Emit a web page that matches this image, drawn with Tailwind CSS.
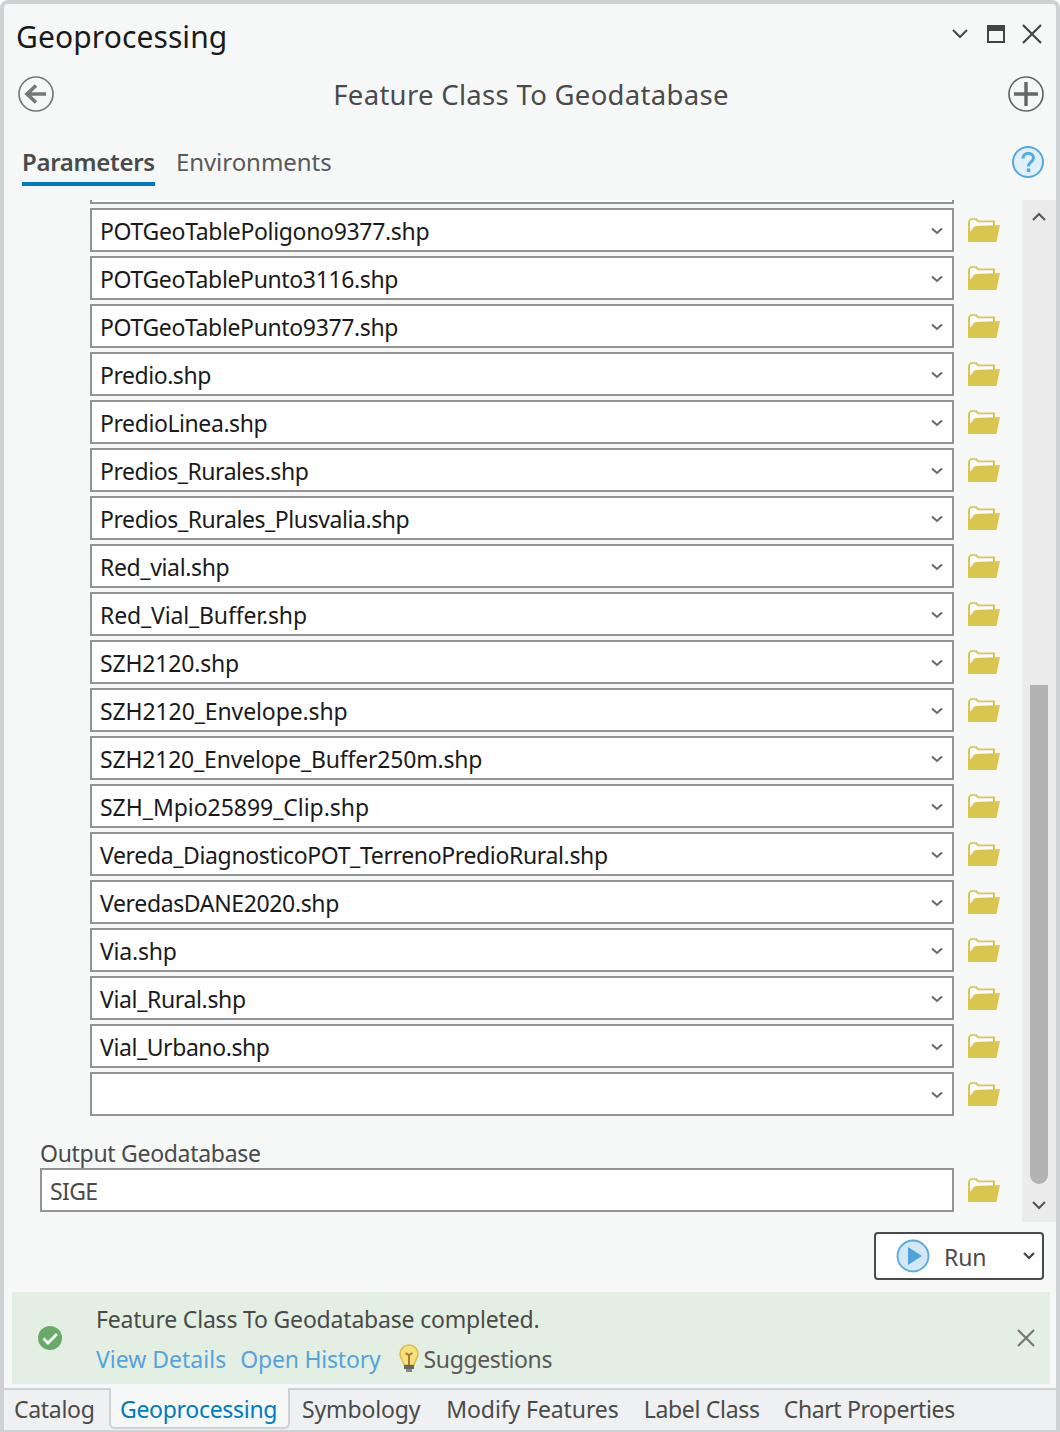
<!DOCTYPE html>
<html><head><meta charset="utf-8"><script src="https://cdn.jsdelivr.net/npm/@tailwindcss/browser@4"></script></head>
<body class="bg-white">
<svg width="0" height="0" class="absolute">
<defs>
<symbol id="folder" viewBox="0 0 32 24"><path d="M1 23V3.500L3 1.200h5l2.500 2.300H26V8" fill="none" stroke="#d9c64e" stroke-width="2"/><path d="M2 10V3.500L3.500 2.200h4l2.500 2.300H25V7.500H9z" fill="#fff"/><path d="M0 24V16L7 8 32 7 28.500 24z" fill="#d9c64e"/></symbol>
<symbol id="chev" viewBox="0 0 12 8"><path d="M1 1.500l5 4.500 5-4.500" fill="none" stroke="#6a6a6a" stroke-width="2"/></symbol>
</defs></svg>
<div class="w-[1060px] h-[1432px] flex flex-col overflow-hidden bg-[#f6f8f8] border-t-4 border-x-4 border-[#d0d1d4] rounded-t-lg font-['Noto_Sans',sans-serif] relative">
  <div class="h-[66px] flex items-center justify-between pl-[12px] pr-[14px] shrink-0">
    <div class="text-[30px] leading-[40px] text-[#1a1a1a] tracking-[0.1px]">Geoprocessing</div>
    <div class="flex items-center -mt-[6px]">
      <svg width="18" height="12" viewBox="0 0 18 12"><path d="M2 2l7 7 7-7" fill="none" stroke="#4a4a4a" stroke-width="2.200"/></svg>
      <svg class="ml-[18px]" width="18" height="18" viewBox="0 0 18 18"><rect x="1" y="1" width="16" height="16" fill="none" stroke="#444" stroke-width="2"/><rect x="1" y="1" width="16" height="5" fill="#444"/></svg>
      <svg class="ml-[17px]" width="20" height="20" viewBox="0 0 20 20"><path d="M1 1l18 18M19 1L1 19" stroke="#444" stroke-width="2.200"/></svg>
    </div>
  </div>
  <div class="h-[48px] flex items-center justify-between pl-[14px] pr-[12px] shrink-0">
    <svg width="36" height="36" viewBox="0 0 36 36"><circle cx="18" cy="18" r="17" fill="none" stroke="#777" stroke-width="1.700"/><path d="M28 18H10M18 9.500L9 18l9 8.500" fill="none" stroke="#777" stroke-width="3.600"/></svg>
    <div class="text-[27.500px] leading-[36px] pt-[2px] text-[#4a4a4a] tracking-[0.3px]">Feature Class To Geodatabase</div>
    <svg width="36" height="36" viewBox="0 0 36 36"><circle cx="18" cy="18" r="17" fill="none" stroke="#666" stroke-width="1.700"/><path d="M18 6v24M6 18h24" stroke="#666" stroke-width="3.400"/></svg>
  </div>
  <div class="h-[82px] flex pl-[18px] pr-[12px] items-start justify-between shrink-0">
    <div class="flex gap-[21px] mt-[25px]">
      <div class="h-[43px] border-b-4 border-[#007ac2] text-[24px] leading-[38px] font-semibold text-[#4a4a4a] tracking-[-0.3px]">Parameters</div>
      <div class="h-[43px] text-[24px] leading-[38px] text-[#595959] tracking-[-0.05px]">Environments</div>
    </div>
    <svg class="mt-[28px]" width="32" height="32" viewBox="0 0 32 32"><circle cx="16" cy="16" r="15" fill="#dfeffb" stroke="#56a8e0" stroke-width="2"/><path d="M11 12.500c0-7 10.500-7 10.500-.5 0 4-5 4-5 8.500" fill="none" stroke="#56a8e0" stroke-width="3"/><rect x="14.800" y="22.500" width="3.500" height="3.500" fill="#56a8e0"/></svg>
  </div>
  <div class="h-[1022px] flex shrink-0 overflow-hidden">
    <div class="w-[1018px] shrink-0">
      <div class="h-[4px] ml-[86px] w-[864px] bg-white border-b-2 border-x-2 border-[#949494]"></div>
      <div class="flex flex-col gap-[4px] mt-[4px]">
        <div class="flex items-center h-[44px]"><div class="ml-[86px] w-[864px] h-[44px] pt-[2px] bg-white border-2 border-[#949494] flex items-center justify-between pl-[8px] pr-[9px] text-[23px] text-[#1a1a1a] tracking-[-0.33px] whitespace-nowrap"><span>POTGeoTablePoligono9377.shp</span><svg width="12" height="8"><use href="#chev"/></svg></div><svg class="ml-[14px]" width="32" height="24"><use href="#folder"/></svg></div>
        <div class="flex items-center h-[44px]"><div class="ml-[86px] w-[864px] h-[44px] pt-[2px] bg-white border-2 border-[#949494] flex items-center justify-between pl-[8px] pr-[9px] text-[23px] text-[#1a1a1a] tracking-[-0.36px] whitespace-nowrap"><span>POTGeoTablePunto3116.shp</span><svg width="12" height="8"><use href="#chev"/></svg></div><svg class="ml-[14px]" width="32" height="24"><use href="#folder"/></svg></div>
        <div class="flex items-center h-[44px]"><div class="ml-[86px] w-[864px] h-[44px] pt-[2px] bg-white border-2 border-[#949494] flex items-center justify-between pl-[8px] pr-[9px] text-[23px] text-[#1a1a1a] tracking-[-0.36px] whitespace-nowrap"><span>POTGeoTablePunto9377.shp</span><svg width="12" height="8"><use href="#chev"/></svg></div><svg class="ml-[14px]" width="32" height="24"><use href="#folder"/></svg></div>
        <div class="flex items-center h-[44px]"><div class="ml-[86px] w-[864px] h-[44px] pt-[2px] bg-white border-2 border-[#949494] flex items-center justify-between pl-[8px] pr-[9px] text-[23px] text-[#1a1a1a] tracking-[-0.46px] whitespace-nowrap"><span>Predio.shp</span><svg width="12" height="8"><use href="#chev"/></svg></div><svg class="ml-[14px]" width="32" height="24"><use href="#folder"/></svg></div>
        <div class="flex items-center h-[44px]"><div class="ml-[86px] w-[864px] h-[44px] pt-[2px] bg-white border-2 border-[#949494] flex items-center justify-between pl-[8px] pr-[9px] text-[23px] text-[#1a1a1a] tracking-[-0.42px] whitespace-nowrap"><span>PredioLinea.shp</span><svg width="12" height="8"><use href="#chev"/></svg></div><svg class="ml-[14px]" width="32" height="24"><use href="#folder"/></svg></div>
        <div class="flex items-center h-[44px]"><div class="ml-[86px] w-[864px] h-[44px] pt-[2px] bg-white border-2 border-[#949494] flex items-center justify-between pl-[8px] pr-[9px] text-[23px] text-[#1a1a1a] tracking-[-0.46px] whitespace-nowrap"><span>Predios_Rurales.shp</span><svg width="12" height="8"><use href="#chev"/></svg></div><svg class="ml-[14px]" width="32" height="24"><use href="#folder"/></svg></div>
        <div class="flex items-center h-[44px]"><div class="ml-[86px] w-[864px] h-[44px] pt-[2px] bg-white border-2 border-[#949494] flex items-center justify-between pl-[8px] pr-[9px] text-[23px] text-[#1a1a1a] tracking-[-0.43px] whitespace-nowrap"><span>Predios_Rurales_Plusvalia.shp</span><svg width="12" height="8"><use href="#chev"/></svg></div><svg class="ml-[14px]" width="32" height="24"><use href="#folder"/></svg></div>
        <div class="flex items-center h-[44px]"><div class="ml-[86px] w-[864px] h-[44px] pt-[2px] bg-white border-2 border-[#949494] flex items-center justify-between pl-[8px] pr-[9px] text-[23px] text-[#1a1a1a] tracking-[-0.36px] whitespace-nowrap"><span>Red_vial.shp</span><svg width="12" height="8"><use href="#chev"/></svg></div><svg class="ml-[14px]" width="32" height="24"><use href="#folder"/></svg></div>
        <div class="flex items-center h-[44px]"><div class="ml-[86px] w-[864px] h-[44px] pt-[2px] bg-white border-2 border-[#949494] flex items-center justify-between pl-[8px] pr-[9px] text-[23px] text-[#1a1a1a] tracking-[-0.15px] whitespace-nowrap"><span>Red_Vial_Buffer.shp</span><svg width="12" height="8"><use href="#chev"/></svg></div><svg class="ml-[14px]" width="32" height="24"><use href="#folder"/></svg></div>
        <div class="flex items-center h-[44px]"><div class="ml-[86px] w-[864px] h-[44px] pt-[2px] bg-white border-2 border-[#949494] flex items-center justify-between pl-[8px] pr-[9px] text-[23px] text-[#1a1a1a] tracking-[-0.18px] whitespace-nowrap"><span>SZH2120.shp</span><svg width="12" height="8"><use href="#chev"/></svg></div><svg class="ml-[14px]" width="32" height="24"><use href="#folder"/></svg></div>
        <div class="flex items-center h-[44px]"><div class="ml-[86px] w-[864px] h-[44px] pt-[2px] bg-white border-2 border-[#949494] flex items-center justify-between pl-[8px] pr-[9px] text-[23px] text-[#1a1a1a] tracking-[-0.11px] whitespace-nowrap"><span>SZH2120_Envelope.shp</span><svg width="12" height="8"><use href="#chev"/></svg></div><svg class="ml-[14px]" width="32" height="24"><use href="#folder"/></svg></div>
        <div class="flex items-center h-[44px]"><div class="ml-[86px] w-[864px] h-[44px] pt-[2px] bg-white border-2 border-[#949494] flex items-center justify-between pl-[8px] pr-[9px] text-[23px] text-[#1a1a1a] tracking-[-0.2px] whitespace-nowrap"><span>SZH2120_Envelope_Buffer250m.shp</span><svg width="12" height="8"><use href="#chev"/></svg></div><svg class="ml-[14px]" width="32" height="24"><use href="#folder"/></svg></div>
        <div class="flex items-center h-[44px]"><div class="ml-[86px] w-[864px] h-[44px] pt-[2px] bg-white border-2 border-[#949494] flex items-center justify-between pl-[8px] pr-[9px] text-[23px] text-[#1a1a1a] tracking-[-0.04px] whitespace-nowrap"><span>SZH_Mpio25899_Clip.shp</span><svg width="12" height="8"><use href="#chev"/></svg></div><svg class="ml-[14px]" width="32" height="24"><use href="#folder"/></svg></div>
        <div class="flex items-center h-[44px]"><div class="ml-[86px] w-[864px] h-[44px] pt-[2px] bg-white border-2 border-[#949494] flex items-center justify-between pl-[8px] pr-[9px] text-[23px] text-[#1a1a1a] tracking-[-0.36px] whitespace-nowrap"><span>Vereda_DiagnosticoPOT_TerrenoPredioRural.shp</span><svg width="12" height="8"><use href="#chev"/></svg></div><svg class="ml-[14px]" width="32" height="24"><use href="#folder"/></svg></div>
        <div class="flex items-center h-[44px]"><div class="ml-[86px] w-[864px] h-[44px] pt-[2px] bg-white border-2 border-[#949494] flex items-center justify-between pl-[8px] pr-[9px] text-[23px] text-[#1a1a1a] tracking-[-0.36px] whitespace-nowrap"><span>VeredasDANE2020.shp</span><svg width="12" height="8"><use href="#chev"/></svg></div><svg class="ml-[14px]" width="32" height="24"><use href="#folder"/></svg></div>
        <div class="flex items-center h-[44px]"><div class="ml-[86px] w-[864px] h-[44px] pt-[2px] bg-white border-2 border-[#949494] flex items-center justify-between pl-[8px] pr-[9px] text-[23px] text-[#1a1a1a] tracking-[-0.22px] whitespace-nowrap"><span>Via.shp</span><svg width="12" height="8"><use href="#chev"/></svg></div><svg class="ml-[14px]" width="32" height="24"><use href="#folder"/></svg></div>
        <div class="flex items-center h-[44px]"><div class="ml-[86px] w-[864px] h-[44px] pt-[2px] bg-white border-2 border-[#949494] flex items-center justify-between pl-[8px] pr-[9px] text-[23px] text-[#1a1a1a] tracking-[-0.36px] whitespace-nowrap"><span>Vial_Rural.shp</span><svg width="12" height="8"><use href="#chev"/></svg></div><svg class="ml-[14px]" width="32" height="24"><use href="#folder"/></svg></div>
        <div class="flex items-center h-[44px]"><div class="ml-[86px] w-[864px] h-[44px] pt-[2px] bg-white border-2 border-[#949494] flex items-center justify-between pl-[8px] pr-[9px] text-[23px] text-[#1a1a1a] tracking-[-0.42px] whitespace-nowrap"><span>Vial_Urbano.shp</span><svg width="12" height="8"><use href="#chev"/></svg></div><svg class="ml-[14px]" width="32" height="24"><use href="#folder"/></svg></div>
        <div class="flex items-center h-[44px]"><div class="ml-[86px] w-[864px] h-[44px] pt-[2px] bg-white border-2 border-[#949494] flex items-center justify-end pl-[8px] pr-[9px]"><svg width="12" height="8"><use href="#chev"/></svg></div><svg class="ml-[14px]" width="32" height="24"><use href="#folder"/></svg></div>
      </div>
      <div class="ml-[36px] mt-[19px] h-[33px] text-[23px] leading-[36px] text-[#4a4a4a] tracking-[-0.3px]">Output Geodatabase</div>
      <div class="flex items-center h-[44px]"><div class="ml-[36px] w-[914px] h-[44px] pt-[2px] bg-white border-2 border-[#949494] flex items-center pl-[8px] text-[23px] text-[#4a4a4a] tracking-[-0.6px]">SIGE</div><svg class="ml-[14px]" width="32" height="24"><use href="#folder"/></svg></div>
    </div>
    <div class="w-[34px] h-[1022px] bg-[#ebebeb] flex flex-col items-center shrink-0 relative">
      <svg class="mt-[12px]" width="16" height="10" viewBox="0 0 16 10"><path d="M2 8l6-6 6 6" fill="none" stroke="#555" stroke-width="2"/></svg>
      <div class="w-[18px] h-[499px] mt-[463px] bg-[#b3b3b3] rounded-b-full rounded-t-[8px] shrink-0"></div>
      <svg class="mt-[16px]" width="16" height="10" viewBox="0 0 16 10"><path d="M2 2l6 6 6-6" fill="none" stroke="#555" stroke-width="2"/></svg>
    </div>
  </div>
  <div class="h-[70px] flex justify-end items-start pr-[12px] pt-[10px] shrink-0">
    <div class="w-[170px] h-[48px] bg-white border-2 border-[#4a4a4a] rounded-[4px] flex items-center pl-[20px] pr-[6px]">
      <svg width="34" height="34" viewBox="0 0 34 34" class="shrink-0"><circle cx="17" cy="17" r="15.500" fill="#d3e8f7" stroke="#5aa9e0" stroke-width="1.800"/><path d="M12 8v18l14-9z" fill="#4fa3dd"/></svg>
      <span class="ml-[14px] text-[23px] pt-[2px] text-[#4a4a4a] tracking-[-0.1px] leading-[34px]">Run</span>
      <svg class="ml-auto" width="14" height="10" viewBox="0 0 14 10"><path d="M2 2l5 5 5-5" fill="none" stroke="#444" stroke-width="2.200"/></svg>
    </div>
  </div>
  <div class="ml-[8px] mr-[6px] h-[92px] bg-[#e4efe3] flex items-center shrink-0 relative">
    <svg class="ml-[26px] shrink-0" width="24" height="24" viewBox="0 0 24 24"><circle cx="12" cy="12" r="12" fill="#68ab68"/><path d="M5.500 12.500l4.500 4.500 9-9" fill="none" stroke="#fff" stroke-width="2.800"/></svg>
    <div class="ml-[34px] flex-1 text-[23px] text-[#4a4a4a] pt-[2px]">
      <div class="leading-[36px] h-[40px] tracking-[-0.19px]">Feature Class To Geodatabase completed.</div>
      <div class="flex items-center leading-[36px] h-[36px]">
        <span class="text-[#56a3dc]">View Details</span>
        <span class="text-[#56a3dc] ml-[14px] tracking-[-0.2px]">Open History</span>
        <svg class="ml-[18px]" width="20" height="30" viewBox="0 0 20 30"><path d="M10 1a9 9 0 0 0-9 9c0 4 3 6 4 11h10c1-5 4-7 4-11a9 9 0 0 0-9-9z" fill="#f5e27a" stroke="#d9bf4a" stroke-width="1.500"/><path d="M6.500 9l3.500 2 3.500-2M10 11v10" fill="none" stroke="#a8743a" stroke-width="2"/><rect x="5" y="21" width="10" height="4" fill="#666"/><rect x="7" y="25" width="6" height="3" fill="#888"/></svg>
        <span class="ml-[5px] text-[#595959] tracking-[-0.35px]">Suggestions</span>
      </div>
    </div>
    <svg class="mr-[14px]" width="20" height="20" viewBox="0 0 20 20"><path d="M2 2l16 16M18 2L2 18" stroke="#777" stroke-width="2.200"/></svg>
  </div>
  <div class="mt-[4px] -mx-[4px] flex-1 flex bg-[#eff0f2] border-t-2 border-b-2 border-x-2 border-[#d0d1d4] rounded-b-[6px] text-[23px] text-[#4a4a4a] leading-[36px] relative">
    <div class="w-[107px] pl-[12px] pt-[1px] shrink-0 tracking-[-0.3px]">Catalog</div>
    <div class="w-[181px] -mt-[2px] h-[41px] bg-[#f6f8f8] border-x-2 border-b-2 border-[#d0d1d4] rounded-b-[6px] text-[#007ac2] pl-[9px] pt-[3px] shrink-0 tracking-[-0.3px]">Geoprocessing</div>
    <div class="pl-[12px] pt-[1px] tracking-[-0.15px]">Symbology</div>
    <div class="pl-[26px] pt-[1px] tracking-[-0.1px]">Modify Features</div>
    <div class="pl-[25px] pt-[1px] tracking-[-0.3px]">Label Class</div>
    <div class="pl-[24px] pt-[1px] tracking-[-0.38px]">Chart Properties</div>
  </div>
</div>
</body></html>
